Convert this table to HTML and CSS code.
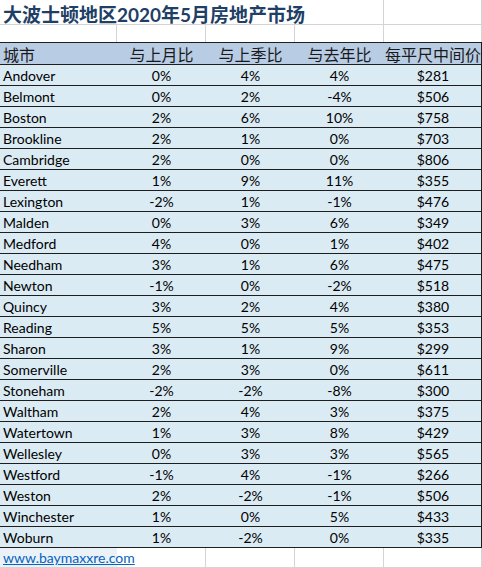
FILE: index.html
```html
<!DOCTYPE html>
<html lang="zh">
<head>
<meta charset="utf-8">
<title>大波士顿地区2020年5月房地产市场</title>
<link rel="stylesheet" href="styles.css">
</head>
<body>
<div class="sheet">
  <div class="row title-row">
    <div class="cell title-cell">大波士顿地区2020年5月房地产市场</div>
    <div class="cell grid-r"></div>
  </div>
  <div class="row blank-row">
    <div class="cell grid-r"></div>
    <div class="cell grid-r"></div>
    <div class="cell grid-r"></div>
    <div class="cell grid-r"></div>
    <div class="cell grid-r"></div>
  </div>
  <div class="row head-row">
    <div class="cell city">城市</div>
    <div class="cell num">与上月比</div>
    <div class="cell num">与上季比</div>
    <div class="cell num">与去年比</div>
    <div class="cell num">每平尺中间价</div>
  </div>
  <div class="row data-row"><div class="cell city">Andover</div><div class="cell num">0%</div><div class="cell num">4%</div><div class="cell num">4%</div><div class="cell num">$281</div></div>
  <div class="row data-row"><div class="cell city">Belmont</div><div class="cell num">0%</div><div class="cell num">2%</div><div class="cell num">-4%</div><div class="cell num">$506</div></div>
  <div class="row data-row"><div class="cell city">Boston</div><div class="cell num">2%</div><div class="cell num">6%</div><div class="cell num">10%</div><div class="cell num">$758</div></div>
  <div class="row data-row"><div class="cell city">Brookline</div><div class="cell num">2%</div><div class="cell num">1%</div><div class="cell num">0%</div><div class="cell num">$703</div></div>
  <div class="row data-row"><div class="cell city">Cambridge</div><div class="cell num">2%</div><div class="cell num">0%</div><div class="cell num">0%</div><div class="cell num">$806</div></div>
  <div class="row data-row"><div class="cell city">Everett</div><div class="cell num">1%</div><div class="cell num">9%</div><div class="cell num">11%</div><div class="cell num">$355</div></div>
  <div class="row data-row"><div class="cell city">Lexington</div><div class="cell num">-2%</div><div class="cell num">1%</div><div class="cell num">-1%</div><div class="cell num">$476</div></div>
  <div class="row data-row"><div class="cell city">Malden</div><div class="cell num">0%</div><div class="cell num">3%</div><div class="cell num">6%</div><div class="cell num">$349</div></div>
  <div class="row data-row"><div class="cell city">Medford</div><div class="cell num">4%</div><div class="cell num">0%</div><div class="cell num">1%</div><div class="cell num">$402</div></div>
  <div class="row data-row"><div class="cell city">Needham</div><div class="cell num">3%</div><div class="cell num">1%</div><div class="cell num">6%</div><div class="cell num">$475</div></div>
  <div class="row data-row"><div class="cell city">Newton</div><div class="cell num">-1%</div><div class="cell num">0%</div><div class="cell num">-2%</div><div class="cell num">$518</div></div>
  <div class="row data-row"><div class="cell city">Quincy</div><div class="cell num">3%</div><div class="cell num">2%</div><div class="cell num">4%</div><div class="cell num">$380</div></div>
  <div class="row data-row"><div class="cell city">Reading</div><div class="cell num">5%</div><div class="cell num">5%</div><div class="cell num">5%</div><div class="cell num">$353</div></div>
  <div class="row data-row"><div class="cell city">Sharon</div><div class="cell num">3%</div><div class="cell num">1%</div><div class="cell num">9%</div><div class="cell num">$299</div></div>
  <div class="row data-row"><div class="cell city">Somerville</div><div class="cell num">2%</div><div class="cell num">3%</div><div class="cell num">0%</div><div class="cell num">$611</div></div>
  <div class="row data-row"><div class="cell city">Stoneham</div><div class="cell num">-2%</div><div class="cell num">-2%</div><div class="cell num">-8%</div><div class="cell num">$300</div></div>
  <div class="row data-row"><div class="cell city">Waltham</div><div class="cell num">2%</div><div class="cell num">4%</div><div class="cell num">3%</div><div class="cell num">$375</div></div>
  <div class="row data-row"><div class="cell city">Watertown</div><div class="cell num">1%</div><div class="cell num">3%</div><div class="cell num">8%</div><div class="cell num">$429</div></div>
  <div class="row data-row"><div class="cell city">Wellesley</div><div class="cell num">0%</div><div class="cell num">3%</div><div class="cell num">3%</div><div class="cell num">$565</div></div>
  <div class="row data-row"><div class="cell city">Westford</div><div class="cell num">-1%</div><div class="cell num">4%</div><div class="cell num">-1%</div><div class="cell num">$266</div></div>
  <div class="row data-row"><div class="cell city">Weston</div><div class="cell num">2%</div><div class="cell num">-2%</div><div class="cell num">-1%</div><div class="cell num">$506</div></div>
  <div class="row data-row"><div class="cell city">Winchester</div><div class="cell num">1%</div><div class="cell num">0%</div><div class="cell num">5%</div><div class="cell num">$433</div></div>
  <div class="row data-row"><div class="cell city">Woburn</div><div class="cell num">1%</div><div class="cell num">-2%</div><div class="cell num">0%</div><div class="cell num">$335</div></div>
  <div class="row link-row">
    <div class="cell link-cell"><a class="link" href="#">www.baymaxxre.com</a></div>
    <div class="cell grid-r"></div>
    <div class="cell grid-r"></div>
    <div class="cell grid-r"></div>
  </div>
</div>
</body>
</html>
```

FILE: styles.css
```css
* {
  box-sizing: border-box;
}

html, body {
  margin: 0;
  padding: 0;
  background: #ffffff;
}

body {
  font-family: Lato, "Noto Sans CJK SC", sans-serif;
  font-size: 14px;
  color: #000000;
  width: 482px;
  height: 568px;
  overflow: hidden;
}

.sheet {
  width: 482px;
}

.row {
  display: grid;
  grid-template-columns: 117px 89px 89px 89px 98px;
}

.cell {
  display: flex;
  align-items: center;
  white-space: nowrap;
  min-width: 0;
}

.grid-r {
  border-right: 1px solid #d4d4d4;
}

/* title */
.title-row {
  height: 25px;
  border-bottom: 1px solid #d4d4d4;
  grid-template-columns: 384px 98px;
}

.title-cell {
  padding-left: 3px;
  font-family: Lato, "Noto Sans CJK SC", sans-serif;
  font-weight: 700;
  font-size: 19px;
  color: #1f3f66;
  border-right: 1px solid #d4d4d4;
  overflow: visible;
}

/* empty row */
.blank-row {
  height: 18px;
  border-bottom: 1px solid #1e1e1e;
}

/* header */
.head-row {
  height: 22px;
  background: #b8cce4;
  border-bottom: 1px solid #1e1e1e;
  border-right: 1px solid #1e1e1e;
  font-family: "Noto Sans CJK SC", sans-serif;
  font-size: 16px;
  color: #1a1a1a;
}

.head-row .cell {
  line-height: 1;
}

/* data */
.data-row {
  height: 21px;
  background: #dbebf4;
  border-bottom: 1px solid #1e1e1e;
  border-right: 1px solid #1e1e1e;
}

.city {
  padding-left: 3px;
}

.num {
  justify-content: center;
}

/* link row */
.link-row {
  height: 20px;
  border-bottom: 1px solid #d4d4d4;
  grid-template-columns: 206px 89px 89px 98px;
}

.link-cell {
  padding-left: 3px;
  border-right: 1px solid #d4d4d4;
  background: linear-gradient(to right, #eaf2f8 0, #eaf2f8 117px, #ffffff 117px);
}

.link {
  color: #0563c1;
  text-decoration: underline;
}
```
